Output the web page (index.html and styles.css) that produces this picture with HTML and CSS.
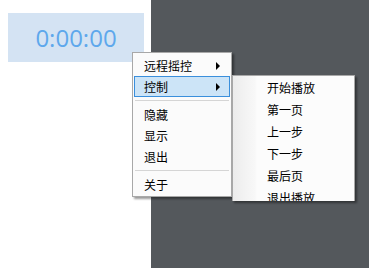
FILE: index.html
```html
<!DOCTYPE html>
<html lang="zh-CN">
<head>
  <meta charset="UTF-8" />
  <meta name="viewport" content="width=device-width, initial-scale=1.0"/>
  <title>计时器</title>
  <link rel="stylesheet" href="styles.css">
</head>
<body>

  <div class="app">
    <div class="side">
      <div class="timer">0:00:00</div>
    </div>
    <div class="stage"></div>
  </div>

  <!-- 右键菜单 -->
  <div class="menu main-menu">
    <div class="item">远程摇控<span class="arrow"></span></div>
    <div class="item active">控制<span class="arrow"></span></div>
    <div class="sep"></div>
    <div class="item">隐藏</div>
    <div class="item">显示</div>
    <div class="item">退出</div>
    <div class="sep"></div>
    <div class="item">关于</div>
  </div>

  <div class="menu sub-menu">
    <div class="item">开始播放</div>
    <div class="item">第一页</div>
    <div class="item">上一步</div>
    <div class="item">下一步</div>
    <div class="item">最后页</div>
    <div class="item">退出播放</div>
  </div>

</body>
</html>
```

FILE: styles.css
```css
* {
  margin: 0;
  padding: 0;
  box-sizing: border-box;
}

body {
  font-family: "Noto Sans CJK SC", "Noto Sans", sans-serif;
  background-color: #54585c;
  width: 369px;
  height: 268px;
  overflow: hidden;
}

.app {
  display: flex;
  height: 268px;
}

.side {
  width: 151px;
  background: white;
  padding: 13px 7px 0 8px;
}

.timer {
  height: 49px;
  background: #d4e3f3;
  color: #5ea8ec;
  font-family: "Open Sans", sans-serif;
  font-size: 24px;
  line-height: 49px;
  text-align: center;
}

.stage {
  flex: 1;
  background: #54585c;
}

.menu {
  position: absolute;
  background: #fbfbfb;
  border: 1px solid #a8a8a8;
  box-shadow: 2px 2px 2px rgba(0,0,0,0.4);
  font-size: 12px;
  color: #000;
}

.main-menu {
  left: 132px;
  top: 52px;
  width: 100px;
  padding: 2px 1px 1px 1px;
}

.item {
  position: relative;
  height: 21px;
  line-height: 21px;
  padding-left: 10px;
}

.item.active {
  background: #cce4f7;
  border: 1px solid #3a8fdc;
  line-height: 19px;
  padding-left: 9px;
}

.arrow {
  position: absolute;
  right: 10px;
  top: 7px;
  border-left: 4px solid #000;
  border-top: 4px solid transparent;
  border-bottom: 4px solid transparent;
}

.item.active .arrow {
  top: 6px;
  right: 9px;
}

.sep {
  height: 1px;
  background: #d5d5d5;
  margin: 3px 1px;
}

.sub-menu {
  left: 232px;
  top: 75px;
  width: 123px;
  height: 126px;
  overflow: hidden;
  border-bottom: none;
  background: linear-gradient(to right, #ececec 0, #f8f8f8 22px, #fcfcfc 24px);
  padding-top: 1px;
}

.sub-menu .item {
  height: 22px;
  line-height: 22px;
  padding-left: 34px;
}
```
